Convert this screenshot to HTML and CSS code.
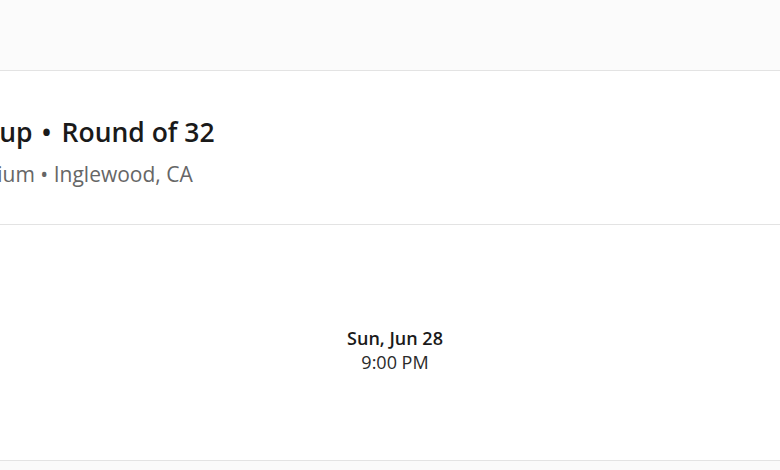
FILE: index.html
```html
<!DOCTYPE html>
<html lang="en">
<head>
<meta charset="utf-8">
<title>Match</title>
<link rel="stylesheet" href="styles.css">
</head>
<body>
<div class="page">
  <header class="topbar"></header>
  <section class="match-head">
    <div class="match-head__inner">
      <h1 class="match-title">World Cup<span class="sep">•</span>Round of 32</h1>
      <p class="match-venue">SoFi Stadium • Inglewood, CA</p>
    </div>
  </section>
  <section class="match-time">
    <div class="match-time__date">Sun, Jun 28</div>
    <div class="match-time__hour">9:00 PM</div>
  </section>
  <footer class="bottombar"></footer>
</div>
</body>
</html>
```

FILE: styles.css
```css
html, body {
  margin: 0;
  padding: 0;
  background: #ffffff;
}
body {
  font-family: "Open Sans", "Noto Sans", sans-serif;
  color: #1a1a1a;
  overflow: hidden;
}
.page {
  width: 780px;
  height: 470px;
  display: flex;
  flex-direction: column;
  overflow: hidden;
}
.topbar {
  height: 70px;
  flex: none;
  background: #fbfbfb;
  border-bottom: 1px solid #e3e3e3;
}
.match-head {
  height: 153px;
  flex: none;
  border-bottom: 1px solid #e3e3e3;
  display: flex;
  align-items: center;
  overflow: hidden;
}
.match-head__inner {
  margin-left: -92px;
  margin-top: 6px;
  white-space: nowrap;
}
.match-title {
  margin: 0 0 0 -9px;
  font-size: 26.5px;
  font-weight: 600;
  line-height: 34px;
  color: #1a1a1a;
}
.sep {
  margin: 0 10px 0 9px;
}
.match-venue {
  margin: 12px 0 0;
  font-size: 21px;
  line-height: 26px;
  color: #666666;
}
.match-time {
  height: 236px;
  flex: none;
  box-sizing: border-box;
  border-bottom: 1px solid #e3e3e3;
  display: flex;
  flex-direction: column;
  align-items: center;
  justify-content: center;
  padding-left: 10px;
  padding-top: 14px;
}
.match-time__date {
  font-size: 18px;
  font-weight: 600;
  line-height: 24px;
  color: #1a1a1a;
}
.match-time__hour {
  font-size: 18px;
  line-height: 24px;
  color: #2a2a2a;
}
.bottombar {
  flex: 1;
  background: #fafafa;
}
```
